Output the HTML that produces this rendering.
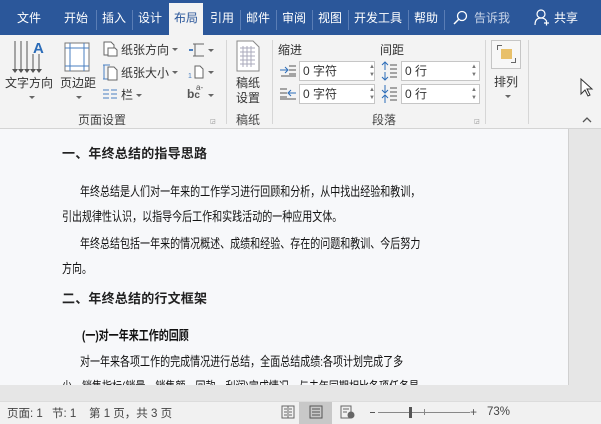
<!DOCTYPE html>
<html><head><meta charset="utf-8">
<style>
*{margin:0;padding:0;box-sizing:border-box}
body{width:601px;height:424px;overflow:hidden;position:relative;background:#f3f3f3;font-family:"Liberation Sans","Noto Sans CJK SC",sans-serif;color:#333}
.a{position:absolute;white-space:nowrap}
.tab{position:absolute;top:0;height:35px;line-height:36px;color:#fff;font-size:12px;text-align:center}
.sep{position:absolute;top:10px;width:1px;height:20px;background:#5a7db5}
.rt{font-size:12px;color:#333}
.vs{position:absolute;top:40px;width:1px;height:84px;background:#d6d6d6}
.car{position:absolute;width:0;height:0;border-left:3px solid transparent;border-right:3px solid transparent;border-top:3px solid #666}
.inp{position:absolute;width:76px;height:20px;border:1px solid #c6c6c6;background:#fff;font-size:12px;line-height:18px;padding-left:3px;color:#333}
.doc{position:absolute;font-size:13px;color:#111;transform:scaleX(0.77);transform-origin:0 0}
.h{position:absolute;font-size:13px;font-weight:bold;color:#222;letter-spacing:0.2px}
</style></head><body>
<div class="a" style="left:0;top:0;width:601px;height:35px;background:#2b579a"></div>
<div class="tab" style="left:14px;width:30px">文件</div>
<div class="tab" style="left:61px;width:30px">开始</div>
<div class="sep" style="left:96px"></div>
<div class="tab" style="left:99px;width:30px">插入</div>
<div class="sep" style="left:132px"></div>
<div class="tab" style="left:135px;width:30px">设计</div>
<div class="tab" style="left:169px;top:3px;width:34px;height:32px;line-height:30px;background:#f3f3f3;color:#2b579a">布局</div>
<div class="tab" style="left:207px;width:30px">引用</div>
<div class="sep" style="left:240px"></div>
<div class="tab" style="left:243px;width:30px">邮件</div>
<div class="sep" style="left:276px"></div>
<div class="tab" style="left:279px;width:30px">审阅</div>
<div class="sep" style="left:312px"></div>
<div class="tab" style="left:315px;width:30px">视图</div>
<div class="sep" style="left:348px"></div>
<div class="tab" style="left:352px;width:52px">开发工具</div>
<div class="sep" style="left:408px"></div>
<div class="tab" style="left:411px;width:30px">帮助</div>
<div class="sep" style="left:444px"></div>
<svg class="a" style="left:452px;top:10px" width="16" height="16"><circle cx="10" cy="6" r="4.5" fill="none" stroke="#fff" stroke-width="1.3"/><line x1="6.5" y1="9.5" x2="2" y2="14" stroke="#fff" stroke-width="1.5"/></svg>
<div class="tab" style="left:472px;width:40px;color:#c8d4e8">告诉我</div>
<svg class="a" style="left:534px;top:9px" width="16" height="18"><circle cx="7" cy="5" r="4" fill="none" stroke="#fff" stroke-width="1.2"/><path d="M1 16 Q1 9 7 9 Q11 9 12.5 12" fill="none" stroke="#fff" stroke-width="1.2"/><path d="M10 14h5M12.5 11.5v5" stroke="#fff" stroke-width="1.2"/></svg>
<div class="tab" style="left:551px;width:30px">共享</div>

<svg class="a" style="left:12px;top:40px" width="36" height="34"><g stroke="#555" stroke-width="1"><line x1="3" y1="1" x2="3" y2="30"/><line x1="9" y1="1" x2="9" y2="30"/><line x1="15" y1="1" x2="15" y2="30"/><line x1="21" y1="14" x2="21" y2="30"/><line x1="27" y1="14" x2="27" y2="30"/></g><g fill="#555"><path d="M0 29h6l-3 4z"/><path d="M6 29h6l-3 4z"/><path d="M12 29h6l-3 4z"/><path d="M18 29h6l-3 4z"/><path d="M24 29h6l-3 4z"/></g><text x="21" y="13" font-size="15" font-weight="bold" fill="#2b6cb8" font-family="Liberation Sans">A</text></svg>
<div class="a rt" style="left:5px;top:74px">文字方向</div>
<div class="car" style="left:29px;top:96px"></div>
<svg class="a" style="left:64px;top:42px" width="26" height="30"><rect x="1" y="1" width="24" height="28" fill="#fff" stroke="#777"/><g stroke="#4a7fc0"><line x1="6" y1="1" x2="6" y2="29"/><line x1="20" y1="1" x2="20" y2="29"/><line x1="1" y1="6" x2="25" y2="6"/><line x1="1" y1="24" x2="25" y2="24"/></g></svg>
<div class="a rt" style="left:60px;top:74px">页边距</div>
<div class="car" style="left:76px;top:96px"></div>
<svg class="a" style="left:102px;top:41px" width="16" height="16"><path d="M2 1h7l3 3v10H2z" fill="#fff" stroke="#666"/><path d="M6 7h7l2 2v6H6z" fill="#fff" stroke="#666"/></svg>
<div class="a rt" style="left:121px;top:41px">纸张方向</div><div class="car" style="left:172px;top:48px"></div>
<svg class="a" style="left:102px;top:63px" width="16" height="18"><path d="M1 2h7M1 16h7M2 2v14" stroke="#4a7fc0"/><path d="M6 4h6l3 3v10H6z" fill="#fff" stroke="#666"/></svg>
<div class="a rt" style="left:121px;top:64px">纸张大小</div><div class="car" style="left:172px;top:71px"></div>
<svg class="a" style="left:102px;top:88px" width="16" height="14"><g stroke="#4a7fc0"><path d="M1 2h6M1 6h6M1 10h6M9 2h6M9 6h6M9 10h6"/></g></svg>
<div class="a rt" style="left:121px;top:86px">栏</div><div class="car" style="left:136px;top:94px"></div>
<svg class="a" style="left:188px;top:42px" width="18" height="16"><path d="M1 8h4" stroke="#4a7fc0" stroke-width="2"/><path d="M5 2h11M5 14h11M7 2v12" stroke="#666" fill="none"/></svg><div class="car" style="left:208px;top:49px"></div>
<svg class="a" style="left:188px;top:64px" width="18" height="16"><text x="0" y="14" font-size="7" fill="#4a7fc0">1</text><path d="M7 2h5l3 3v9H7z" fill="#fff" stroke="#666"/></svg><div class="car" style="left:208px;top:71px"></div>
<div class="a" style="left:187px;top:87px;font-size:12px;color:#555;font-weight:bold">b<span style="font-size:10px">c</span></div><div class="a" style="left:196px;top:83px;font-size:8px;color:#555">a-</div><div class="car" style="left:208px;top:94px"></div>
<div class="a" style="left:78px;top:111px;font-size:12px;color:#444">页面设置</div>
<div class="a" style="left:210px;top:118px;font-size:6px;color:#888">◲</div>
<div class="vs" style="left:226px"></div>
<svg class="a" style="left:236px;top:40px" width="24" height="32"><path d="M1 1h16l6 6v24H1z" fill="#fff" stroke="#888"/><g stroke="#aab"><path d="M4 8h15M4 12h15M4 16h15M4 20h15M4 24h15M7 6v21M11 6v21M15 6v21"/></g></svg>
<div class="a rt" style="left:236px;top:74px">稿纸</div>
<div class="a rt" style="left:236px;top:89px">设置</div>
<div class="a" style="left:236px;top:111px;font-size:12px;color:#444">稿纸</div>
<div class="vs" style="left:272px"></div>
<div class="a rt" style="left:278px;top:41px">缩进</div>
<div class="a rt" style="left:380px;top:41px">间距</div>
<svg class="a" style="left:279px;top:64px" width="18" height="14"><path d="M1 6h7M6 3l3 3-3 3" stroke="#2b6cb8" fill="none"/><path d="M10 2h7M10 6h7M10 10h7M2 12h15" stroke="#555"/></svg>
<svg class="a" style="left:279px;top:87px" width="18" height="14"><path d="M10 6h7M12 3l-3 3 3 3" stroke="#2b6cb8" fill="none"/><path d="M1 2h7M1 6h7M1 10h7M1 12h16" stroke="#555"/></svg>
<div class="inp" style="left:299px;top:61px">0 字符</div>
<div class="inp" style="left:299px;top:84px">0 字符</div>
<div class="a" style="left:369px;top:63px;font-size:6px;color:#777;line-height:8px">▲<br>▼</div>
<div class="a" style="left:369px;top:86px;font-size:6px;color:#777;line-height:8px">▲<br>▼</div>
<svg class="a" style="left:381px;top:61px" width="18" height="20"><path d="M4 1v8M1 4l3-3 3 3M4 11v8M1 16l3 3 3-3" stroke="#2b6cb8" fill="none"/><path d="M9 4h7M9 8h7M9 12h7M9 16h7" stroke="#555"/></svg>
<svg class="a" style="left:381px;top:84px" width="18" height="20"><path d="M4 1v8M1 6l3 3 3-3M4 11v8M1 14l3-3 3 3" stroke="#2b6cb8" fill="none"/><path d="M9 4h7M9 8h7M9 12h7M9 16h7" stroke="#555"/></svg>
<div class="inp" style="left:401px;top:61px;width:79px">0 行</div>
<div class="inp" style="left:401px;top:84px;width:79px">0 行</div>
<div class="a" style="left:471px;top:63px;font-size:6px;color:#777;line-height:8px">▲<br>▼</div>
<div class="a" style="left:471px;top:86px;font-size:6px;color:#777;line-height:8px">▲<br>▼</div>
<div class="a" style="left:372px;top:111px;font-size:12px;color:#444">段落</div>
<div class="a" style="left:474px;top:118px;font-size:6px;color:#888">◲</div>
<div class="vs" style="left:485px"></div>
<div class="a" style="left:491px;top:40px;width:30px;height:29px;border:1px solid #c6c6c6;background:#f7f7f7"></div>
<div class="a" style="left:501px;top:49px;width:11px;height:10px;background:#e8c06a"></div>
<div class="a" style="left:497px;top:45px;width:5px;height:5px;border-left:1px solid #666;border-top:1px solid #666"></div>
<div class="a" style="left:511px;top:58px;width:5px;height:5px;border-right:1px solid #666;border-bottom:1px solid #666"></div>
<div class="a rt" style="left:494px;top:73px">排列</div>
<div class="car" style="left:505px;top:95px"></div>
<div class="vs" style="left:528px"></div>
<svg class="a" style="left:580px;top:78px" width="14" height="20"><path d="M1 1v15l4-4 3 6 2-1-3-6h5z" fill="#fff" stroke="#333"/></svg>
<svg class="a" style="left:582px;top:117px" width="10" height="6"><path d="M1 5l4-4 4 4" fill="none" stroke="#555" stroke-width="1.3"/></svg>
<div class="a" style="left:0;top:128px;width:601px;height:1px;background:#d4d4d4"></div>

<div class="a" style="left:0;top:129px;width:601px;height:273px;background:#e6e6e6"></div>
<div class="a" style="left:0;top:129px;width:569px;height:256px;background:#f7f8fa;border-right:1px solid #d0d0d0;overflow:hidden">
<div class="h" style="left:62px;top:14px">一、年终总结的指导思路</div>
<div class="doc" style="left:80px;top:52px">年终总结是人们对一年来的工作学习进行回顾和分析，从中找出经验和教训，</div>
<div class="doc" style="left:62px;top:77px">引出规律性认识，以指导今后工作和实践活动的一种应用文体。</div>
<div class="doc" style="left:80px;top:104px">年终总结包括一年来的情况概述、成绩和经验、存在的问题和教训、今后努力</div>
<div class="doc" style="left:62px;top:129px">方向。</div>
<div class="h" style="left:62px;top:159px">二、年终总结的行文框架</div>
<div class="doc" style="left:82px;top:196px;font-weight:bold">(一)对一年来工作的回顾</div>
<div class="doc" style="left:80px;top:222px">对一年来各项工作的完成情况进行总结，全面总结成绩:各项计划完成了多</div>
<div class="doc" style="left:62px;top:247px">少，销售指标(销量、销售额、回款、利润)完成情况，与去年同期相比各项任务是</div>
</div>

<div class="a" style="left:0;top:401px;width:601px;height:23px;background:#f1f1f1;border-top:1px solid #dcdcdc"></div>
<div class="a" style="left:7px;top:405px;font-size:11.5px;color:#444">页面: 1</div>
<div class="a" style="left:52px;top:405px;font-size:11.5px;color:#444">节: 1</div>
<div class="a" style="left:89px;top:405px;font-size:11.5px;color:#444">第 1 页，共 3 页</div>
<svg class="a" style="left:281px;top:405px" width="14" height="14"><rect x="1" y="1" width="12" height="12" fill="none" stroke="#666"/><path d="M7 1v12M3 4h3M3 7h3M3 10h3M8 4h3M8 7h3M8 10h3" stroke="#666"/></svg>
<div class="a" style="left:299px;top:402px;width:33px;height:22px;background:#c8c8c8"></div>
<svg class="a" style="left:309px;top:405px" width="14" height="14"><rect x="1" y="1" width="12" height="12" fill="none" stroke="#555"/><path d="M3 4h8M3 7h8M3 10h8" stroke="#555"/></svg>
<svg class="a" style="left:340px;top:405px" width="15" height="14"><rect x="1" y="1" width="10" height="12" fill="none" stroke="#666"/><path d="M3 4h6M3 7h4" stroke="#666"/><circle cx="11" cy="10" r="3.5" fill="#666"/></svg>
<div class="a" style="left:370px;top:412px;width:5px;height:1px;background:#555"></div>
<div class="a" style="left:378px;top:412px;width:92px;height:1px;background:#888"></div>
<div class="a" style="left:409px;top:407px;width:3px;height:11px;background:#555"></div>
<div class="a" style="left:424px;top:409px;width:1px;height:6px;background:#888"></div>
<div class="a" style="left:470px;top:405px;font-size:12px;color:#555">+</div>
<div class="a" style="left:487px;top:406px;font-size:11.5px;color:#444">73%</div>
</body></html>
